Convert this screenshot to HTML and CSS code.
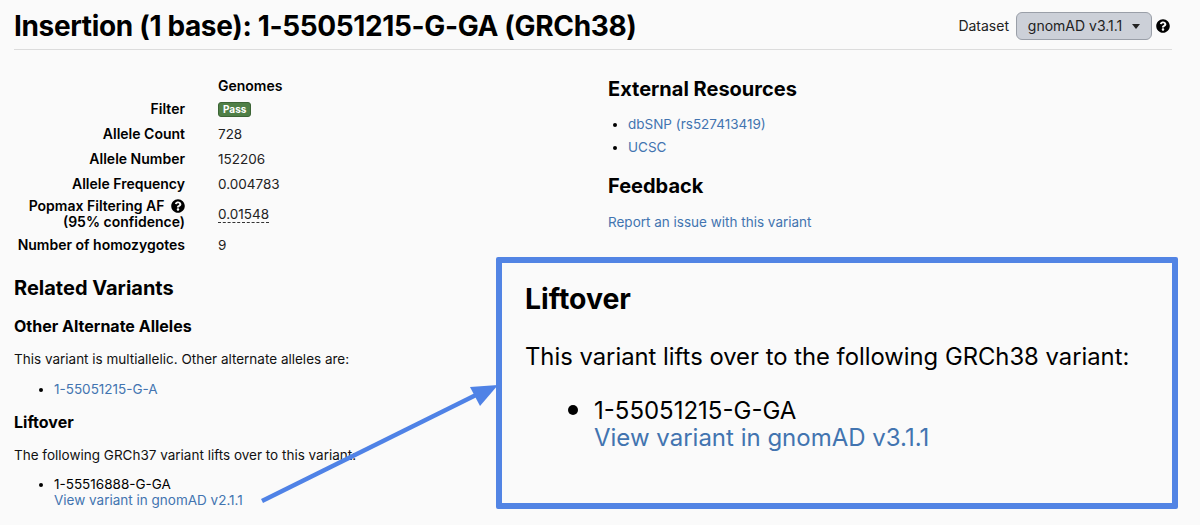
FILE: index.html
```html
<!DOCTYPE html>
<html lang="en">
<head>
  <meta charset="UTF-8">
  <title>Insertion (1 base): 1-55051215-G-GA (GRCh38)</title>
  <link rel="stylesheet" href="styles.css">
</head>
<body>

  <!-- Page header -->
  <div class="page-header">
    <h1>Insertion (1 base): 1-55051215-G-GA (GRCh38)</h1>
    <div class="dataset">
      <span>Dataset</span>
      <button class="dataset-btn">gnomAD v3.1.1 <span class="caret"></span></button>
      <svg class="help-icon" viewBox="0 0 512 512"><path d="M504 256c0 137-111 248-248 248S8 393 8 256 119 8 256 8s248 111 248 248zM262.700 90c-54.500 0-89.300 23-116.500 63.800-3.500 5.300-2.400 12.400 2.700 16.300l34.700 26.300c5.200 3.900 12.600 3 16.700-2.100 17.900-22.700 30.100-35.800 57.300-35.800 20.400 0 45.700 13.100 45.700 32.900 0 15-12.400 22.700-32.500 34-23.500 13.200-54.600 29.600-54.600 70.600V300c0 6.600 5.400 12 12 12h56c6.600 0 12-5.400 12-12v-1.300c0-28.400 83-29.600 83-106.700 0-58-60.200-102-116.500-102zM256 338c-25.400 0-46 20.600-46 46s20.600 46 46 46 46-20.600 46-46-20.600-46-46-46z"/></svg>
    </div>
  </div>

  <div class="columns">
    <!-- Left column -->
    <div class="col-left">
      <table class="freq-table">
        <tr class="head-row"><th></th><td class="col-title">Genomes</td></tr>
        <tr><th>Filter</th><td><span class="badge">Pass</span></td></tr>
        <tr><th>Allele Count</th><td>728</td></tr>
        <tr><th>Allele Number</th><td>152206</td></tr>
        <tr><th>Allele Frequency</th><td>0.004783</td></tr>
        <tr class="tall">
          <th>Popmax Filtering AF
            <svg class="help-icon small" viewBox="0 0 512 512"><path d="M504 256c0 137-111 248-248 248S8 393 8 256 119 8 256 8s248 111 248 248zM262.700 90c-54.500 0-89.300 23-116.500 63.800-3.500 5.300-2.400 12.400 2.700 16.300l34.700 26.300c5.200 3.900 12.600 3 16.700-2.100 17.900-22.700 30.100-35.800 57.300-35.800 20.400 0 45.700 13.100 45.700 32.900 0 15-12.400 22.700-32.500 34-23.500 13.200-54.600 29.600-54.600 70.600V300c0 6.600 5.400 12 12 12h56c6.600 0 12-5.400 12-12v-1.300c0-28.400 83-29.600 83-106.700 0-58-60.200-102-116.500-102zM256 338c-25.400 0-46 20.600-46 46s20.600 46 46 46 46-20.600 46-46-20.600-46-46-46z"/></svg><br>(95% confidence)</th>
          <td><span class="dotted">0.01548</span></td>
        </tr>
        <tr><th>Number of homozygotes</th><td>9</td></tr>
      </table>

      <h2 class="related">Related Variants</h2>
      <h3>Other Alternate Alleles</h3>
      <p>This variant is multiallelic. Other alternate alleles are:</p>
      <ul><li><a href="#">1-55051215-G-A</a></li></ul>
      <h3>Liftover</h3>
      <p>The following GRCh37 variant lifts over to this variant:</p>
      <ul><li>1-55516888-G-GA<br><a href="#">View variant in gnomAD v2.1.1</a></li></ul>
    </div>

    <!-- Right column -->
    <div class="col-right">
      <h2>External Resources</h2>
      <ul class="links">
        <li><a href="#">dbSNP (rs527413419)</a></li>
        <li><a href="#">UCSC</a></li>
      </ul>
      <h2 class="feedback">Feedback</h2>
      <p><a href="#">Report an issue with this variant</a></p>
    </div>
  </div>

  <!-- Zoomed callout drawn over the page -->
  <svg class="arrow" viewBox="0 0 1200 525"><path d="M262 501 L478 394" stroke="#4f82e6" stroke-width="4.500" fill="none"/><path d="M498 385 L470 387 L480 406 Z" fill="#4f82e6"/></svg>
  <div class="callout">
    <h2>Liftover</h2>
    <p>This variant lifts over to the following GRCh38 variant:</p>
    <ul><li>1-55051215-G-GA<br><a href="#">View variant in gnomAD v3.1.1</a></li></ul>
  </div>

</body>
</html>
```

FILE: styles.css
```css
body {
  margin: 0;
  background: #fafafa;
  color: #000;
  font-family: Inter, 'Liberation Sans', sans-serif;
  font-size: 14px;
  height: 525px;
  overflow: hidden;
  position: relative;
}

a {
  color: #4274b0;
  text-decoration: none;
}

/* Page header */
.page-header {
  margin: 0 28px 0 14px;
  height: 49px;
  border-bottom: 1px solid #dcdcdc;
  display: flex;
  justify-content: space-between;
  align-items: center;
}

h1 {
  margin: 3px 0 0;
  font-size: 28px;
  font-weight: 700;
  letter-spacing: -0.35px;
}

.dataset {
  display: flex;
  align-items: center;
  gap: 7px;
  font-size: 14px;
  color: #222;
  margin-right: 2px;
  margin-top: 2px;
}

.dataset-btn {
  width: 136px;
  height: 28px;
  padding: 0;
  background: #ccd0d8;
  border: 1px solid #9a9fa8;
  border-radius: 6px;
  font: 14px Inter, 'Liberation Sans', sans-serif;
  color: #222;
}

.caret {
  display: inline-block;
  border: 4px solid transparent;
  border-top: 5px solid #222;
  border-bottom: 0;
  margin-left: 6px;
  vertical-align: 2px;
}

.help-icon {
  width: 14px;
  height: 14px;
  margin-left: -3px;
}

.help-icon.small {
  margin: 0 0 0 3px;
  vertical-align: -2px;
}

/* Columns */
.columns {
  display: flex;
  padding: 0 14px;
}

.col-left {
  width: 594px;
  padding-top: 26px;
}

.col-right {
  padding-top: 27px;
}

/* Frequency table */
.freq-table {
  border-collapse: collapse;
  font-size: 14px;
  line-height: 16px;
}

.freq-table th {
  width: 171px;
  padding: 0 33px 0 0;
  text-align: right;
  font-weight: 600;
  white-space: nowrap;
  height: 25px;
}

.freq-table td {
  padding: 0;
  font-size: 13.500px;
  color: #222;
}

.freq-table .head-row th {
  height: 20px;
}

.freq-table .col-title {
  font-size: 14px;
  font-weight: 600;
  color: #000;
}

.freq-table .tall th {
  height: 36px;
}

.badge {
  display: inline-block;
  background: #4f7f46;
  border: 1px solid #3c6435;
  border-radius: 3px;
  color: #fff;
  font-size: 10px;
  font-weight: 700;
  line-height: 13px;
  padding: 0 4px;
}

.dotted {
  border-bottom: 1px dashed #333;
}

/* Headings and text */
h2 {
  margin: 0;
  font-size: 20px;
  font-weight: 700;
  line-height: 24px;
}

h3 {
  margin: 0;
  font-size: 16px;
  font-weight: 700;
  line-height: 20px;
}

p {
  margin: 0;
  font-size: 13.500px;
  line-height: 18px;
  color: #111;
}

ul {
  margin: 0;
  padding-left: 40px;
  font-size: 13.500px;
  line-height: 16px;
}

.related {
  margin: 19px 0 16px;
}

.col-left p {
  margin: 14px 0 12.500px;
}

.col-left ul {
  margin-bottom: 15px;
}

.links {
  margin-top: 12px;
  padding-left: 20px;
  line-height: 23px;
}

.feedback {
  margin: 15px 0 15px;
}

/* Callout */
.arrow {
  position: absolute;
  left: 0;
  top: 0;
  width: 1200px;
  height: 525px;
}

.callout {
  position: absolute;
  left: 496px;
  top: 257px;
  width: 682px;
  height: 252px;
  box-sizing: border-box;
  border: 6px solid #5284e4;
  border-radius: 2px;
  background: #fafafa;
  padding: 20px 0 0 23px;
}

.callout h2 {
  font-size: 28.400px;
  line-height: 32px;
}

.callout p {
  margin: 27px 0 0;
  font-size: 23.800px;
  line-height: 30px;
  color: #000;
}

.callout ul {
  margin-top: 23px;
  padding-left: 69px;
  font-size: 24px;
  line-height: 27px;
}

.callout li::marker {
  font-size: 30px;
}
```
